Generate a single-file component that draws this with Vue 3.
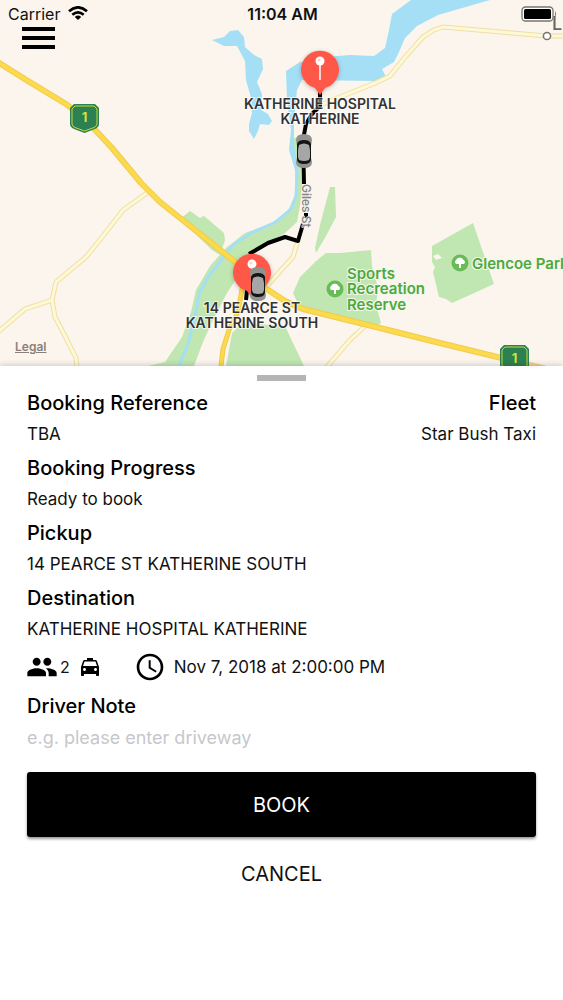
<template>
  <main class="booking-page">
    <section class="map">
      <svg class="map-canvas" viewBox="0 0 563 366" role="img" aria-label="Route map">
        <rect width="563" height="366" fill="#fbf5ee" />

        <!-- parks -->
        <g fill="#c0e6b2">
          <path d="M290 138 L301 138 L300 150 L302 185 L300 206 L297 222 L284 234 L262 245 L245 266 L227 293 L213 320 L203 342 L194 366 L148 366 L165 362 L182 337 L191 312 L196 290 L210 266 L226 248 L245 233 L270 224 L288 211 L295 195 L295 165 Z" />
          <path d="M180 219 L190 211 L200 218 L204 216 L224 233 L225 240 L220 255 L212 250 Z" />
          <path d="M232 333 L242 323 L285 326 L294 345 L304 366 L226 366 Z" />
          <path d="M293 293 L300 277 L315 262 L326 253 L340 253 L371 250 L372 266 L378 288 L376 305 L381 323 L373 328 L300 308 Z" />
          <path d="M330 187 L335 187 L336 217 L326 236 L316 253 L315 248 L320 225 Z" />
          <path d="M432 246 L473 223 L494 284 L452 303 L446 299 L439 297 L433 272 L435 267 L432 262 Z" />
        </g>
        <path d="M433 256 L438 254 L442 258 L436 260 Z" fill="#fbf5ee" />

        <!-- water -->
        <g fill="#a5dff5">
          <path d="M212 40 L224 37 L230 31 L238 30 L244 37 L245 47 L254 55 L262 59 L263 69 L257 82 L262 94 L261 110 L268 114 L272 121 L269 125 L260 124 L258 131 L254 139 L249 131 L249 124 L252 113 L251 98 L246 80 L245 61 L237 46 L224 46 Z" />
          <path d="M411 0 L392 14 L389 30 L385 48 L374 56 L350 55 L325 57 L300 62 L286 71 L287 100 L291 130 L289 150 L295 170 L298 170 L294 145 L294 120 L297 90 L302 80 L375 81 L386 77 L382 69 L394 62 L399 52 L405 38 L417 26 L438 15 L490 0 Z" />
        </g>
        <path d="M293 150 L297 172 L296 196 L291 209 L276 222 L251 233 L233 245 L222 259 L208 277 L199 294 L195 317 L188 344 L179 366" class="stream" />

        <!-- minor roads -->
        <g class="road-edge">
          <path :d="road" v-for="road in minorRoads" :key="road" />
        </g>
        <g class="road-fill">
          <path :d="road" v-for="road in minorRoads" :key="road" />
        </g>

        <!-- highway -->
        <path d="M244 278 L238 312 L229 330 L223 349 L221 366" class="branch-edge" />
        <path d="M244 278 L238 312 L229 330 L223 349 L221 366" class="branch" />
        <path d="M505 359 L545 368" stroke="#f7cb83" stroke-width="5" fill="none" />
        <path :d="highway" class="highway-edge" />
        <path :d="highway" class="highway" />

        <!-- route shields -->
        <g v-for="shield in shields" :key="shield.x" :transform="`translate(${shield.x} ${shield.y})`">
          <path d="M4 0 H25 L29 4 V20 Q29 23 25 25 L14.5 29 L4 25 Q0 23 0 20 V4 Z" fill="#2c8051" />
          <path d="M5 2 H24 L27 5 V20 Q27 22 24 23.5 L14.5 27 L5 23.5 Q2 22 2 20 V5 Z" fill="none" stroke="#c5d93c" stroke-width="1" />
          <text x="14.5" y="18" class="shield-text">1</text>
        </g>

        <!-- place labels -->
        <g v-for="park in parks" :key="park.x">
          <circle :cx="park.x" :cy="park.y" r="8.5" fill="#68bb57" />
          <path :transform="`translate(${park.x} ${park.y})`" d="M-1 5 V1 H-3.5 A2.3 2.3 0 0 1 -4 -3 A4 4 0 0 1 3.5 -3 A2.3 2.3 0 0 1 4 1 H1 V5 Z" fill="#fff" />
          <text class="park-label">
            <tspan v-for="line in park.lines" :key="line.text" :x="park.x + 12" :y="line.y">{{ line.text }}</tspan>
          </text>
        </g>
        <circle cx="547" cy="36" r="3.6" fill="#fff" stroke="#77716b" stroke-width="1.5" />
        <text x="552" y="30" class="town-label">L</text>

        <!-- driving route -->
        <path d="M320 91 V106 L312 114 L306 124 L303 140 L304 184 M306 213 V218 M303 224 L298 241 L285 237 L268 243 L249 254 M247 290 L246 300" class="route" />
        <text transform="translate(302 184) rotate(90)" class="street-label">Giles St</text>

        <!-- pins -->
        <g v-for="pin in pins" :key="pin.x" :transform="`translate(${pin.x} ${pin.y})`">
          <path d="M0 25 L-5 18 A19 19 0 1 1 5 18 Z" fill="#ff5848" class="pin-shape" />
          <path d="M0 -7 V10" stroke="#fff" stroke-width="1.5" />
          <circle cy="-9" r="4.5" fill="#fff" />
          <circle cx="-1" cy="-10" r="1.5" fill="#ffd3cc" />
        </g>

        <!-- cars -->
        <g v-for="car in cars" :key="car.x" :transform="`translate(${car.x} ${car.y})`">
          <path d="M-8 -11 Q-8 -17 0 -17 Q8 -17 8 -11 L7 -5 V7 L8 11 Q8 17 0 17 Q-8 17 -8 11 L-7 7 V-5 Z" fill="#91918f" />
          <path d="M-7 -7 Q-6 -11 0 -11 Q6 -11 7 -7 V8 Q7 13 0 13 Q-7 13 -7 8 Z" fill="#151515" />
          <path d="M-5 -6 Q0 -9 5 -6 L6 -1 V6 L5 9 Q0 11 -5 9 L-6 6 V-1 Z" fill="#a6a6a6" />
        </g>

        <text class="stop-label">
          <tspan x="320" y="109">KATHERINE HOSPITAL</tspan>
          <tspan x="320" y="124">KATHERINE</tspan>
        </text>
        <text class="stop-label">
          <tspan x="252" y="313">14 PEARCE ST</tspan>
          <tspan x="252" y="328">KATHERINE SOUTH</tspan>
        </text>
      </svg>

      <header class="map-header">
        <div class="status-bar">
          <div class="carrier">
            <span>Carrier</span>
            <svg width="20" height="15" viewBox="0 0 20 15" fill="none" stroke="#000" stroke-width="2.6">
              <path d="M1 5.3 Q10 -2.7 19 5.3" />
              <path d="M4.3 8.8 Q10 3.8 15.7 8.8" />
              <path d="M10 14 L6.8 10.9 Q10 8.3 13.2 10.9 Z" fill="#000" stroke="none" />
            </svg>
          </div>
          <span class="clock">11:04 AM</span>
          <svg class="battery" width="36" height="16" viewBox="0 0 36 16">
            <rect x="1" y="1" width="31" height="14" rx="3.5" fill="#fff" stroke="#77736f" stroke-width="1.3" />
            <rect x="3" y="3" width="27" height="10" rx="1.5" fill="#000" />
            <path d="M34 5 Q36 8 34 11 Z" fill="#77736f" />
          </svg>
        </div>
        <button class="menu-button" type="button" aria-label="Menu">
          <span></span>
          <span></span>
          <span></span>
        </button>
      </header>
      <a class="legal-link" href="#">Legal</a>
    </section>

    <section class="sheet">
      <div class="handle"></div>

      <div class="details">
        <div class="detail-row" v-for="(row, index) in rows" :key="index">
          <div v-for="item in row" :key="item.label" class="detail">
            <h2 class="detail-label">{{ item.label }}</h2>
            <p class="detail-value">{{ item.value }}</p>
          </div>
        </div>
      </div>

      <div class="trip-info">
        <svg class="people-icon" width="32" height="32" viewBox="0 0 24 24">
          <path d="M16 11c1.66 0 2.99-1.34 2.99-3S17.66 5 16 5s-3 1.34-3 3 1.34 3 3 3zm-8 0c1.66 0 2.99-1.34 2.99-3S9.66 5 8 5 5 6.34 5 8s1.34 3 3 3zm0 2c-2.33 0-7 1.17-7 3.5V19h14v-2.5c0-2.33-4.67-3.5-7-3.5zm8 0c-.29 0-.62.02-.97.05 1.16.84 1.97 1.97 1.97 3.45V19h6v-2.5c0-2.33-4.67-3.5-7-3.5z" />
        </svg>
        <span class="passengers">{{ passengers }}</span>
        <svg class="taxi-icon" width="24" height="24" viewBox="0 0 24 24">
          <path d="M18.92 6.01C18.72 5.42 18.16 5 17.5 5H15V3H9v2H6.5c-.66 0-1.21.42-1.42 1.01L3 12v8c0 .55.45 1 1 1h1c.55 0 1-.45 1-1v-1h12v1c0 .55.45 1 1 1h1c.55 0 1-.45 1-1v-8l-2.08-5.99zM6.5 16c-.83 0-1.5-.67-1.5-1.5S5.67 13 6.5 13s1.5.67 1.5 1.5S7.33 16 6.5 16zm11 0c-.83 0-1.5-.67-1.5-1.5s.67-1.5 1.5-1.5 1.5.67 1.5 1.5-.67 1.5-1.5 1.5zM5 11l1.5-4.5h11L19 11H5z" />
        </svg>
        <svg class="time-icon" width="32" height="32" viewBox="0 0 24 24">
          <path d="M11.99 2C6.47 2 2 6.48 2 12s4.47 10 9.99 10C17.52 22 22 17.52 22 12S17.52 2 11.99 2zM12 20c-4.42 0-8-3.58-8-8s3.58-8 8-8 8 3.58 8 8-3.58 8-8 8zm.5-13H11v6l5.25 3.15.75-1.23-4.5-2.67z" />
        </svg>
        <time>Nov 7, 2018 at 2:00:00 PM</time>
      </div>

      <div class="note">
        <label class="detail-label" for="driver-note">Driver Note</label>
        <input id="driver-note" v-model="note" type="text" placeholder="e.g. please enter driveway" />
      </div>

      <button class="book-button" type="button">BOOK</button>
      <button class="cancel-button" type="button">CANCEL</button>
    </section>
  </main>
</template>

<script setup>
import { ref } from 'vue'

const note = ref('')
const passengers = ref(2)

const rows = [
  [
    { label: 'Booking Reference', value: 'TBA' },
    { label: 'Fleet', value: 'Star Bush Taxi' }
  ],
  [{ label: 'Booking Progress', value: 'Ready to book' }],
  [{ label: 'Pickup', value: '14 PEARCE ST KATHERINE SOUTH' }],
  [{ label: 'Destination', value: 'KATHERINE HOSPITAL KATHERINE' }]
]

const highway = 'M-4 61 L28 81 L66 104 L85 119 L112 148 L141 183 L160 202 L190 226 L234 261 L262 286 L285 301 L303 309 L376 327 L440 343 L510 360'

const minorRoads = [
  'M147 193 L123 210 L103 236 L86 257 L56 282 L52 300 L25 309 L-2 332',
  'M52 300 L55 317 L65 336 L76 358 L77 368',
  'M320 105 L375 83 L390 76 L406 56 L423 37 L434 30 L443 27 L512 33 L547 36 L566 36',
  'M298 240 L293 257 L282 269 L268 285',
  'M365 326 L349 341 L326 368'
]

const shields = [
  { x: 70, y: 104 },
  { x: 500, y: 345 }
]

const parks = [
  {
    x: 335,
    y: 289,
    lines: [
      { text: 'Sports', y: 279 },
      { text: 'Recreation', y: 294 },
      { text: 'Reserve', y: 310 }
    ]
  },
  { x: 460, y: 263, lines: [{ text: 'Glencoe Park', y: 269 }] }
]

const pins = [
  { x: 320, y: 70 },
  { x: 252, y: 273 }
]

const cars = [
  { x: 304, y: 151 },
  { x: 258, y: 284 }
]
</script>

<style>
body {
  margin: 0;
  background: #ffffff;
}
</style>

<style scoped>
.booking-page {
  font-family: Inter, "Liberation Sans", sans-serif;
  color: #111111;
}

.map {
  position: relative;
  overflow: hidden;
}

.map-canvas {
  display: block;
  width: 100%;
}

.stream {
  fill: none;
  stroke: #a5dff5;
  stroke-width: 3;
}

.road-edge path {
  fill: none;
  stroke: #eedfa6;
  stroke-width: 5;
}

.road-fill path {
  fill: none;
  stroke: #fff8d6;
  stroke-width: 3;
}

.highway-edge,
.highway,
.branch-edge,
.branch,
.route {
  fill: none;
  stroke-linejoin: round;
}

.highway-edge {
  stroke: #f2ca50;
  stroke-width: 6;
}

.highway {
  stroke: #fbda4b;
  stroke-width: 4;
}

.branch-edge {
  stroke: #efc94d;
  stroke-width: 5;
}

.branch {
  stroke: #fbda4b;
  stroke-width: 3;
}

.route {
  stroke: #000000;
  stroke-width: 4;
}

.shield-text {
  fill: #d5df35;
  font-size: 13px;
  font-weight: 700;
  text-anchor: middle;
}

.park-label {
  fill: #4fa83f;
  font-size: 15px;
  font-weight: 600;
  paint-order: stroke;
  stroke: #f4f8ea;
  stroke-width: 2px;
}

.town-label {
  fill: #6b6661;
  font-size: 18px;
  font-weight: 500;
}

.street-label {
  fill: #858585;
  font-size: 12px;
  font-weight: 500;
  paint-order: stroke;
  stroke: #f5f2ed;
  stroke-width: 1px;
}

.stop-label {
  fill: #333333;
  font-size: 14px;
  font-weight: 600;
  text-anchor: middle;
  paint-order: stroke;
  stroke: rgba(255, 255, 255, 0.7);
  stroke-width: 2px;
}

.pin-shape {
  filter: drop-shadow(0 1px 2px rgba(0, 0, 0, 0.25));
}

.map-header {
  position: absolute;
  top: 0;
  left: 0;
  right: 0;
}

.status-bar {
  display: grid;
  grid-template-columns: 1fr auto 1fr;
  align-items: center;
  height: 27px;
  padding: 0 6px 0 8px;
}

.carrier {
  display: flex;
  align-items: center;
  gap: 8px;
  font-size: 16px;
}

.clock {
  font-size: 16px;
  font-weight: 600;
}

.battery {
  justify-self: end;
}

.menu-button {
  display: flex;
  flex-direction: column;
  gap: 5px;
  width: 33px;
  margin-left: 22px;
  padding: 0;
  border: none;
  background: none;
  cursor: pointer;
}

.menu-button span {
  height: 4px;
  background: #000000;
}

.legal-link {
  position: absolute;
  left: 15px;
  bottom: 12px;
  font-size: 12px;
  font-weight: 600;
  color: #88817b;
}

.sheet {
  position: relative;
  display: flex;
  flex-direction: column;
  padding: 9px 27px 24px;
  background: #ffffff;
  box-shadow: 0 -1px 6px rgba(0, 0, 0, 0.18);
}

.handle {
  align-self: center;
  width: 49px;
  height: 6px;
  background: #b5b5b5;
}

.details {
  display: flex;
  flex-direction: column;
  gap: 3px;
  margin-top: 7px;
}

.detail-row {
  display: flex;
  justify-content: space-between;
}

.detail + .detail {
  text-align: right;
}

.detail-label {
  margin: 0;
  font-size: 20px;
  font-weight: 500;
  line-height: 30px;
  color: #000000;
}

.detail-value {
  margin: 0;
  font-size: 17px;
  line-height: 32px;
}

.trip-info {
  display: flex;
  align-items: center;
  margin-top: 6px;
  font-size: 17px;
}

.people-icon {
  margin-left: -1px;
}

.passengers {
  margin-left: 2px;
  font-size: 16px;
}

.taxi-icon {
  margin-left: 8px;
}

.time-icon {
  margin: 0 8px 0 32px;
}

.note {
  display: flex;
  flex-direction: column;
  margin-top: 8px;
}

.note input {
  height: 32px;
  padding: 0;
  border: none;
  outline: none;
  font-family: inherit;
  font-size: 18px;
}

.note input::placeholder {
  color: #c7c7cb;
  opacity: 1;
}

.book-button,
.cancel-button {
  border: none;
  border-radius: 3px;
  font-family: inherit;
  font-size: 20px;
  cursor: pointer;
}

.book-button {
  height: 65px;
  margin-top: 19px;
  background: #000000;
  color: #ffffff;
  box-shadow: 0 2px 3px rgba(0, 0, 0, 0.4);
}

.cancel-button {
  height: 44px;
  margin-top: 15px;
  background: none;
  color: #111111;
}
</style>
